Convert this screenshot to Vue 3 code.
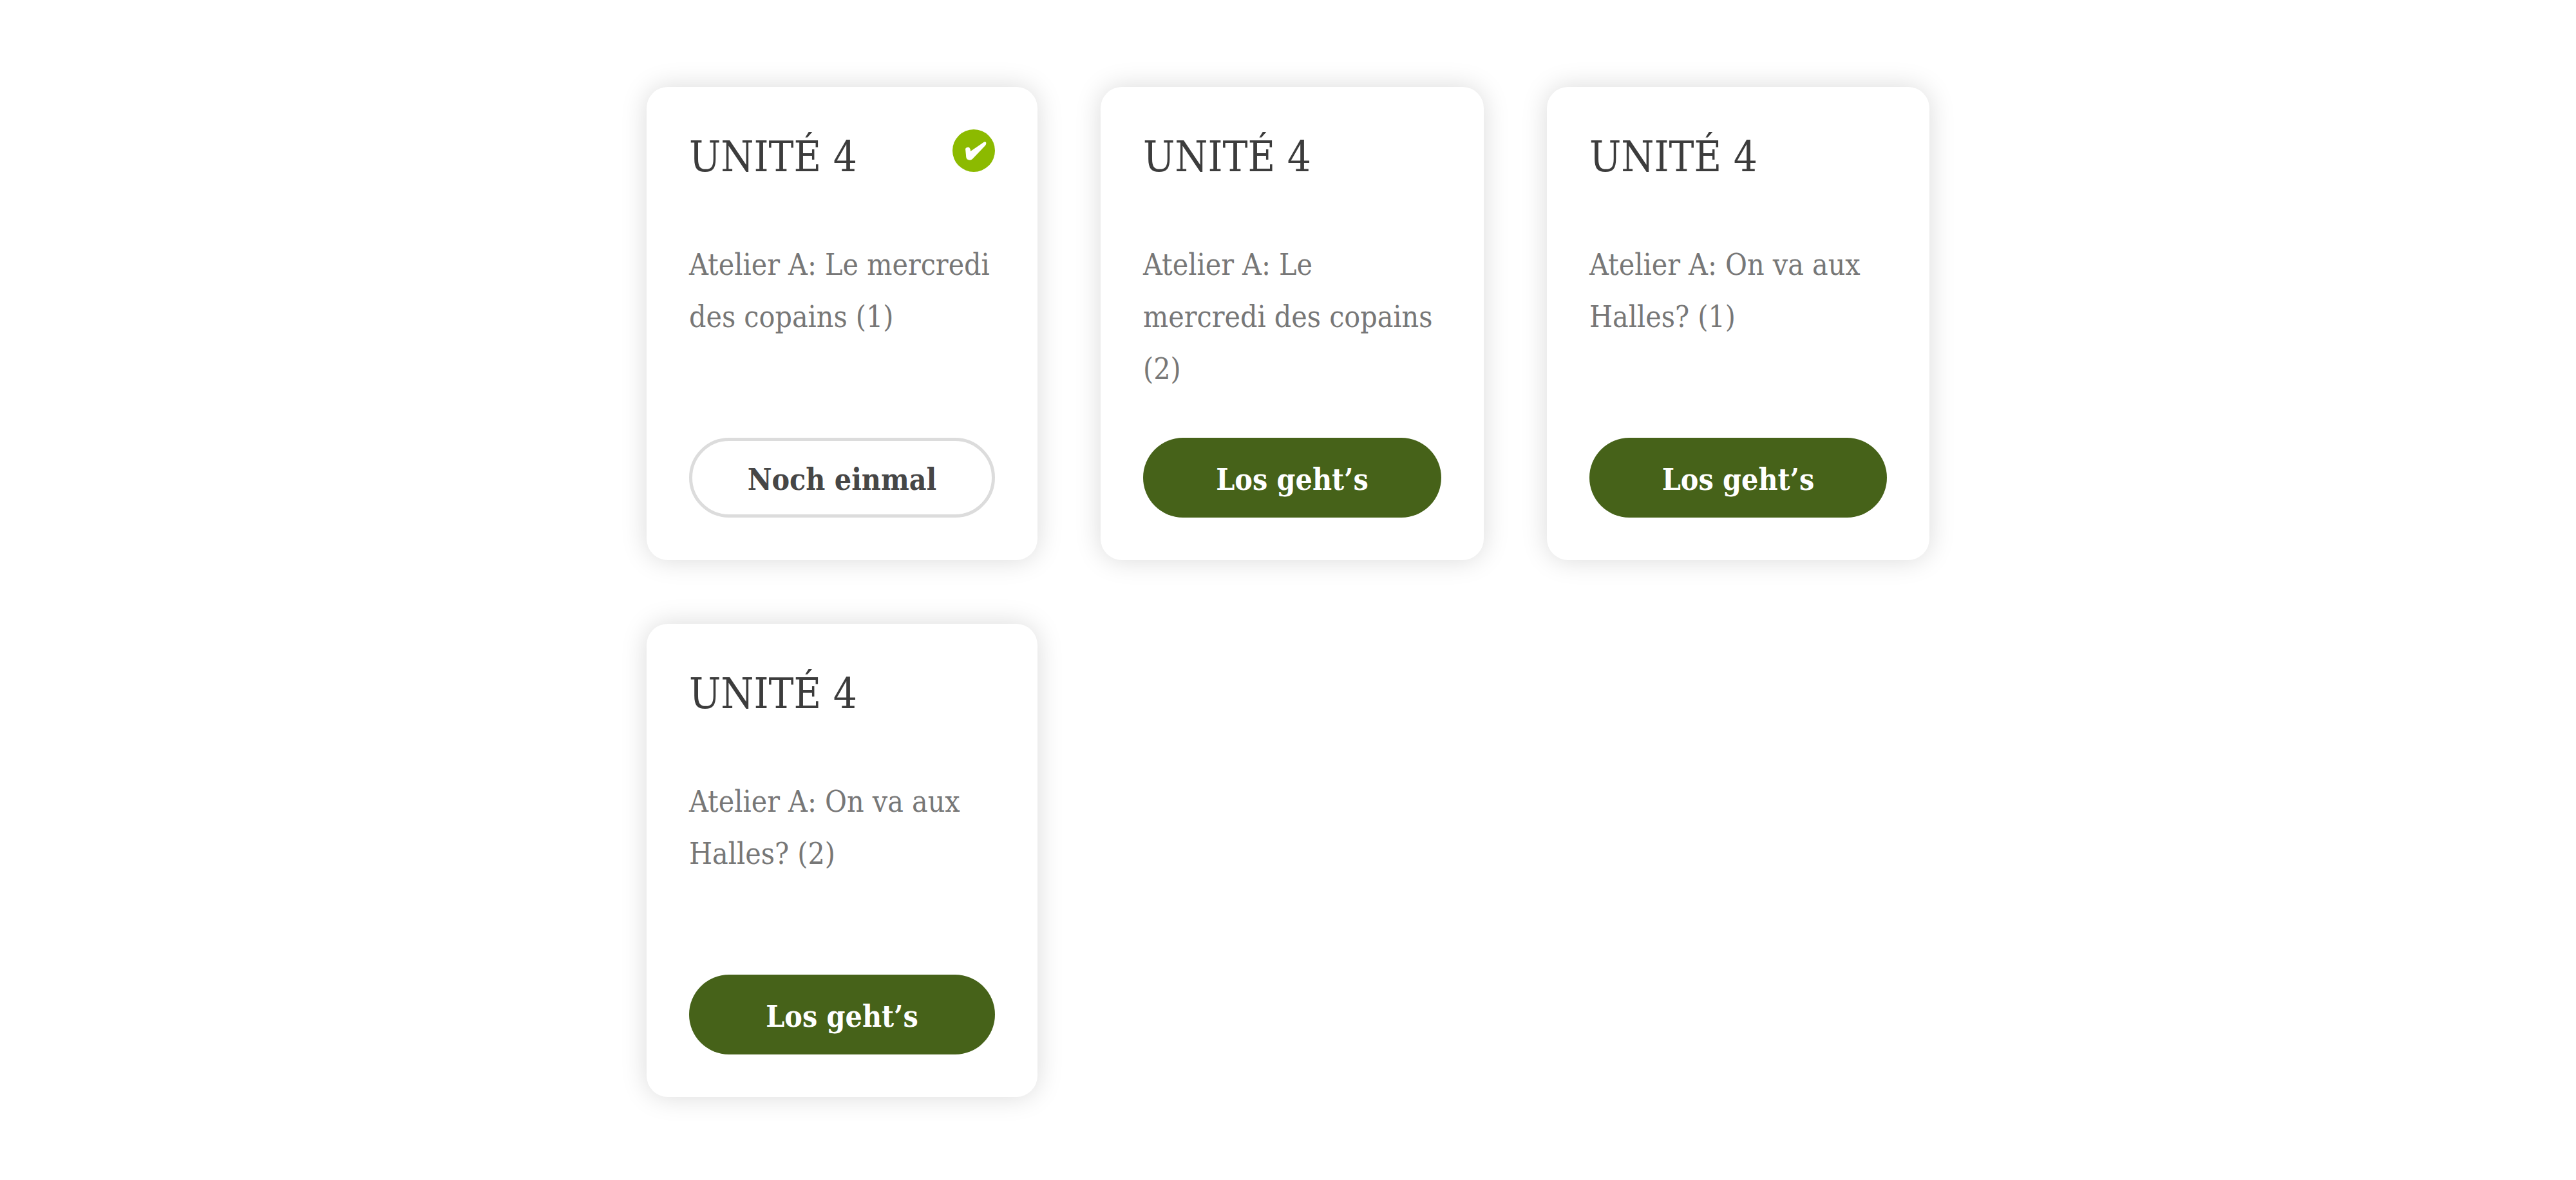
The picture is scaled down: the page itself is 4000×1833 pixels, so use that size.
<script setup>
const units = [
  { title: 'UNITÉ 4', lines: ['Atelier A: Le mercredi', 'des copains (1)'], done: true },
  { title: 'UNITÉ 4', lines: ['Atelier A: Le', 'mercredi des copains', '(2)'], done: false },
  { title: 'UNITÉ 4', lines: ['Atelier A: On va aux', 'Halles? (1)'], done: false },
  { title: 'UNITÉ 4', lines: ['Atelier A: On va aux', 'Halles? (2)'], done: false }
]
</script>

<template>
  <main class="page">
    <div class="grid">
      <article v-for="(unit, i) in units" :key="i" class="card">
        <header class="head">
          <h2 class="title">{{ unit.title }}</h2>
          <svg v-if="unit.done" class="badge" viewBox="0 0 66 66" role="img" aria-label="Erledigt">
            <circle cx="33" cy="33" r="33" fill="#8cba00" />
            <path
              d="M20 30 Q22 27 26 28 Q28 30 28 34 L47 21 Q50 18 52 20 Q53 22 51 25 L31 46 Q28 49 24 47 Q21 46 21 40 Z"
              fill="#fff"
            />
          </svg>
        </header>
        <p class="text">{{ unit.lines.join('\n') }}</p>
        <button type="button" class="action" :class="{ outline: unit.done }">
          {{ unit.done ? 'Noch einmal' : 'Los geht’s' }}
        </button>
      </article>
    </div>
  </main>
</template>

<style>
body {
  margin: 0;
  background: #fff;
}
</style>

<style scoped>
.page {
  padding: 135px 40px 130px;
  font-family: 'Roboto Slab', 'DejaVu Serif Condensed', 'DejaVu Serif', serif;
}
.grid {
  display: grid;
  grid-template-columns: 607fr 595fr 594fr;
  gap: 99px 98px;
  max-width: 1992px;
  margin: 0 auto;
}
.card {
  display: flex;
  flex-direction: column;
  box-sizing: border-box;
  padding: 66px;
  border-radius: 33px;
  background: #fff;
  box-shadow: 0 0 40px rgba(0, 0, 0, 0.15);
}
.head {
  display: flex;
  justify-content: space-between;
  align-items: flex-start;
  margin-bottom: 84px;
}
.title {
  margin: 0;
  font-size: 65px;
  line-height: 86px;
  font-weight: 400;
  color: #3c3c3c;
}
.badge {
  width: 66px;
  height: 66px;
}
.text {
  min-height: 243px;
  margin: 0 0 66px;
  font-size: 46px;
  line-height: 81px;
  color: #777;
  white-space: pre;
}
.action {
  box-sizing: border-box;
  height: 124px;
  margin-top: auto;
  padding: 6px 0 0;
  border: 0;
  border-radius: 62px;
  background: #466219;
  color: #fff;
  font-family: inherit;
  font-size: 46px;
  font-weight: 700;
  cursor: pointer;
}
.action.outline {
  border: 5px solid #dcdcdc;
  background: #fff;
  color: #464646;
}
</style>
